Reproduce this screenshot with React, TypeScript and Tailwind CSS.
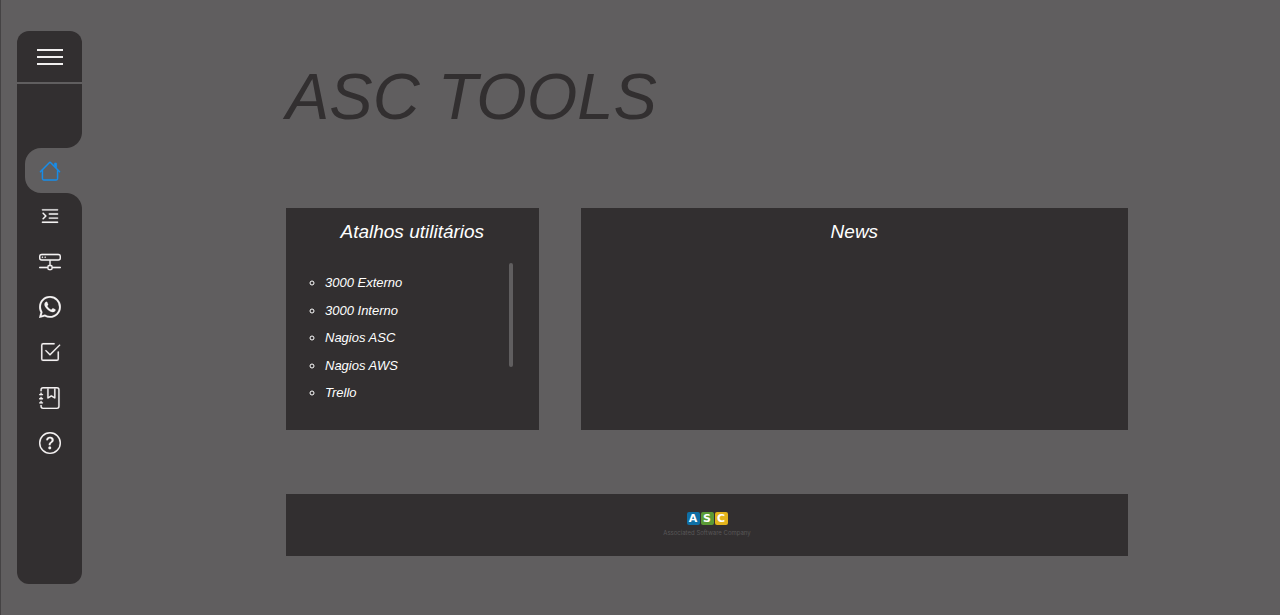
import type { ReactNode } from "react";
import {
  BsCheck2Square,
  BsHddNetwork,
  BsJournalBookmark,
  BsQuestionCircle,
  BsTextIndentLeft,
  BsWhatsapp,
} from "react-icons/bs";

function HouseIcon() {
  return (
    <svg
      viewBox="0 0 16 16"
      className="size-[22px] stroke-current stroke-[0.1]"
      fill="currentColor"
      fillRule="evenodd"
      aria-hidden="true"
    >
      <path d="M2 13.5V7h1v6.5a.5.5 0 0 0 .5.5h9a.5.5 0 0 0 .5-.5V7h1v6.5a1.5 1.5 0 0 1-1.5 1.5h-9A1.5 1.5 0 0 1 2 13.5zm11-11V6l-2-2V2.5a.5.5 0 0 1 .5-.5h1a.5.5 0 0 1 .5.5z" />
      <path d="M7.293 1.5a1 1 0 0 1 1.414 0l6.647 6.646a.5.5 0 0 1-.708.708L8 2.207 1.354 8.854a.5.5 0 1 1-.708-.708L7.293 1.5z" />
    </svg>
  );
}

type NavItem = { label: string; icon: ReactNode; active?: boolean };

const iconClass = "size-[22px] stroke-current stroke-[0.1]";

const navItems: NavItem[] = [
  { label: "Início", icon: <HouseIcon />, active: true },
  { label: "Comandos", icon: <BsTextIndentLeft className={iconClass} /> },
  { label: "Servidores", icon: <BsHddNetwork className={iconClass} /> },
  { label: "WhatsApp", icon: <BsWhatsapp className={iconClass} /> },
  { label: "Tarefas", icon: <BsCheck2Square className={iconClass} /> },
  { label: "Agenda", icon: <BsJournalBookmark className={iconClass} /> },
  { label: "Ajuda", icon: <BsQuestionCircle className={iconClass} /> },
];

const shortcuts = ["3000 Externo", "3000 Interno", "Nagios ASC", "Nagios AWS", "Trello"];

const logoTiles = [
  { letter: "A", color: "bg-[#0f6fa5]" },
  { letter: "S", color: "bg-[#5b9a35]" },
  { letter: "C", color: "bg-[#e3b31c]" },
];

function Sidebar() {
  return (
    <aside className="flex w-[65px] shrink-0 flex-col rounded-xl bg-[#322f30]">
      <button
        type="button"
        aria-label="Abrir menu"
        className="flex h-[53px] flex-col items-center justify-center gap-[5px] border-b-2 border-[#605e5f]"
      >
        <span className="h-[2px] w-[26px] bg-[#f2f0f0]" />
        <span className="h-[2px] w-[26px] bg-[#f2f0f0]" />
        <span className="h-[2px] w-[26px] bg-[#f2f0f0]" />
      </button>
      <nav className="mt-16">
        <ul className="grid h-[318px] auto-rows-fr pl-2">
          {navItems.map((item) => (
            <li
              key={item.label}
              className={item.active ? "relative rounded-l-2xl bg-[#605e5f] text-[#1a8de8]" : "text-[#f5f3f3]"}
            >
              {item.active && (
                <>
                  <span className="absolute -top-4 right-0 size-4 bg-[radial-gradient(circle_at_0_0,#322f30_15.5px,#605e5f_16.5px)]" />
                  <span className="absolute -bottom-4 right-0 size-4 bg-[radial-gradient(circle_at_0_100%,#322f30_15.5px,#605e5f_16.5px)]" />
                </>
              )}
              <a href="#" aria-label={item.label} className="flex h-full items-center justify-center pr-2">
                {item.icon}
              </a>
            </li>
          ))}
        </ul>
      </nav>
    </aside>
  );
}

export default function App() {
  return (
    <div className="flex min-h-screen border-l border-[#454344] bg-[#605e5f] pt-[31px] pb-[31px] pl-4 font-['Liberation_Sans',Arial,sans-serif] italic">
      <Sidebar />
      <main className="flex-1 pr-[152px] pl-[204px]">
        <h1 className="pt-[30px] text-[65px] leading-[72px] text-[#322f30]">ASC TOOLS</h1>
        <div className="mt-[75px] grid grid-cols-[30%_65%] justify-between">
          <section className="h-[222px] bg-[#322f30] pt-2.5 text-white">
            <h2 className="text-center text-[19px] leading-7">Atalhos utilitários</h2>
            <div className="mt-[17px] mr-[26px] flex justify-between">
              <ul className="mt-1.5 ml-[39px] grid h-[138px] list-[circle] auto-rows-fr text-[13px] leading-7">
                {shortcuts.map((name) => (
                  <li key={name}>
                    <a href="#">{name}</a>
                  </li>
                ))}
              </ul>
              <span className="h-[104px] w-1 rounded-sm bg-[#605e5f]" />
            </div>
          </section>
          <section className="h-[222px] bg-[#322f30] pt-2.5 text-white">
            <h2 className="text-center text-[19px] leading-7">News</h2>
          </section>
        </div>
        <footer className="mt-16 flex h-[62px] flex-col items-center bg-[#322f30] pt-[18px] not-italic">
          <div className="flex gap-px">
            {logoTiles.map((tile) => (
              <span
                key={tile.letter}
                className={`${tile.color} flex size-[13px] items-center justify-center rounded-xs font-['DejaVu_Sans',sans-serif] text-[11px] leading-none font-bold text-white`}
              >
                {tile.letter}
              </span>
            ))}
          </div>
          <p className="mt-1 font-['Inter',sans-serif] text-[6px] leading-[8px] text-[#595758]">
            Associated Software Company
          </p>
        </footer>
      </main>
    </div>
  );
}
